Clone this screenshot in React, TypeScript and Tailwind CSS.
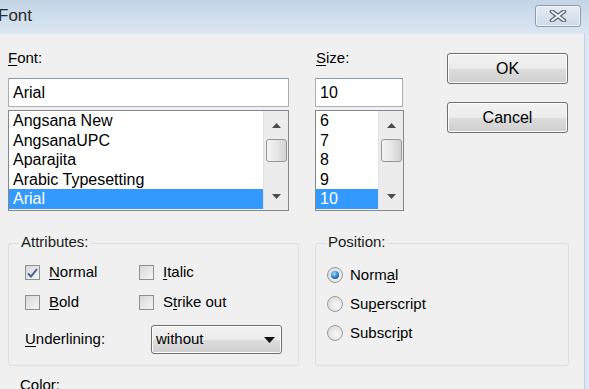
const FONTS = ["Angsana New", "AngsanaUPC", "Aparajita", "Arabic Typesetting", "Arial"];
const SIZES = ["6", "7", "8", "9", "10"];

function Key({ text, at }: { text: string; at: number }) {
  return (
    <>
      {text.slice(0, at)}
      <span className="underline underline-offset-2">{text[at]}</span>
      {text.slice(at + 1)}
    </>
  );
}

function Arrow({ down }: { down?: boolean }) {
  return (
    <svg width="9" height="5" viewBox="0 0 9 5" className="block">
      <path d={down ? "M0 0h9L4.5 5z" : "M0 5h9L4.5 0z"} fill="#4d4d4d" />
    </svg>
  );
}

function ScrollBar() {
  return (
    <div className="flex w-[25px] shrink-0 flex-col items-center bg-[#ececec] border-l border-[#e2e2e2]">
      <div className="mt-[12px]">
        <Arrow />
      </div>
      <div className="mt-[11px] h-[23px] w-[21px] rounded-[3px] border border-[#979797] bg-gradient-to-r from-[#f4f4f4] via-[#e6e6e6] to-[#d2d2d2]" />
      <div className="mt-auto mb-[11px]">
        <Arrow down />
      </div>
    </div>
  );
}

function ListBox({ items, width, selected }: { items: string[]; width: string; selected: number }) {
  return (
    <div className={`mt-[3px] flex h-[101px] ${width} border border-[#828790] bg-white`}>
      <div className="flex-1 overflow-hidden">
        {items.map((item, i) => (
          <div
            key={item}
            className={`h-[19.6px] pl-[4px] text-[16px] leading-[19.6px] ${
              i === selected ? "bg-[#3399ff] text-white" : "text-black"
            }`}
          >
            {item}
          </div>
        ))}
      </div>
      <ScrollBar />
    </div>
  );
}

function TextBox({ value, width }: { value: string; width: string }) {
  return (
    <div
      className={`mt-[11px] h-[29px] ${width} border border-[#abadb3] border-t-[#8b99ad] bg-white pl-[4px] text-[16px] leading-[27px] text-black`}
    >
      {value}
    </div>
  );
}

function Button({ label, className }: { label: string; className?: string }) {
  return (
    <div
      className={`flex h-[31px] w-[121px] items-center justify-center rounded-[3px] border border-[#707070] bg-[linear-gradient(#f2f2f2,#ebebeb_50%,#dddddd_50%,#cfcfcf)] text-[16px] text-black shadow-[inset_0_0_0_1px_#fcfcfc] ${className ?? ""}`}
    >
      {label}
    </div>
  );
}

function CheckBox({ checked }: { checked?: boolean }) {
  return (
    <div className="flex h-[15px] w-[15px] shrink-0 items-center justify-center border border-[#8e8f8f] bg-[linear-gradient(135deg,#d8d8d8,#f6f6f6)]">
      {checked && (
        <svg width="11" height="10" viewBox="0 0 11 10">
          <path d="M1 5.5 L4 8.5 L10 1" fill="none" stroke="#4a5f97" strokeWidth="2" />
        </svg>
      )}
    </div>
  );
}

function Radio({ checked }: { checked?: boolean }) {
  return (
    <div className="flex h-[16px] w-[16px] shrink-0 items-center justify-center rounded-full border border-[#9a9a9a] bg-[radial-gradient(circle_at_60%_60%,#f8f8f8,#d4d4d4)]">
      {checked && (
        <div className="h-[8px] w-[8px] rounded-full bg-[radial-gradient(circle_at_40%_35%,#a8dcff,#1d73bd_60%,#0c3f78)]" />
      )}
    </div>
  );
}

function Group({ title, className, children }: { title: string; className: string; children: React.ReactNode }) {
  return (
    <div className={`relative h-[123px] rounded-[3px] border border-[#d5dfe5] ${className}`}>
      <span className="absolute top-[-11px] left-[10px] bg-[#f0f0f0] px-[2px] text-[15px] leading-[18px] text-[#1a1a1a]">
        {title}
      </span>
      {children}
    </div>
  );
}

export default function App() {
  return (
    <div className="h-[389px] w-[589px] overflow-hidden bg-[#f0f0f0] font-['Liberation_Sans',Arial,sans-serif] text-[15px] text-black">
      {/* title bar */}
      <div className="flex h-[33px] items-start bg-gradient-to-b from-[#c4d4e6] to-[#dbe6f2]">
        <span className="ml-[-2px] mt-[6px] text-[17px] leading-[20px] text-[#2a2a2a]">Font</span>
        <div className="ml-auto mt-[5px] mr-[8px] flex h-[22px] w-[46px] items-center justify-center rounded-[3px] border border-[#8c9cb0] bg-gradient-to-b from-[#e4ecf5] to-[#cfdbe9] shadow-[inset_0_0_0_1px_#f0f5fa]">
          <svg width="18" height="12" viewBox="0 0 18 12">
            <path d="M3 1.5 L15 10.5 M15 1.5 L3 10.5" stroke="#5d6670" strokeWidth="4.5" strokeLinecap="round" />
            <path d="M3 1.5 L15 10.5 M15 1.5 L3 10.5" stroke="#eef1f5" strokeWidth="2" strokeLinecap="round" />
          </svg>
        </div>
      </div>

      <div className="flex h-[356px]">
        <div className="w-[584px] border-t border-[#dfe6ee] pl-[8px]">
          {/* top row */}
          <div className="flex">
            <div className="mt-[15px] flex w-[281px] flex-col">
              <span className="h-[18px] leading-[18px]">
                <Key text="Font:" at={0} />
              </span>
              <TextBox value="Arial" width="w-[281px]" />
              <ListBox items={FONTS} width="w-[281px]" selected={4} />
            </div>
            <div className="ml-[26px] mt-[15px] flex flex-col">
              <span className="ml-[1px] h-[18px] leading-[18px]">
                <Key text="Size:" at={0} />
              </span>
              <TextBox value="10" width="w-[88px]" />
              <ListBox items={SIZES} width="w-[89px]" selected={4} />
            </div>
            <div className="ml-[43px] mt-[19px] flex flex-col">
              <Button label="OK" />
              <Button label="Cancel" className="mt-[18px]" />
            </div>
          </div>

          {/* groups */}
          <div className="mt-[32px] flex">
            <Group title="Attributes:" className="w-[291px]">
              <div className="flex flex-col pl-[16px] pt-[21px]">
                <div className="flex h-[15px] items-center">
                  <div className="flex w-[114px] items-center gap-[9px]">
                    <CheckBox checked />
                    <span><Key text="Normal" at={0} /></span>
                  </div>
                  <div className="flex items-center gap-[9px]">
                    <CheckBox />
                    <span><Key text="Italic" at={0} /></span>
                  </div>
                </div>
                <div className="mt-[15px] flex h-[15px] items-center">
                  <div className="flex w-[114px] items-center gap-[9px]">
                    <CheckBox />
                    <span><Key text="Bold" at={0} /></span>
                  </div>
                  <div className="flex items-center gap-[9px]">
                    <CheckBox />
                    <span><Key text="Strike out" at={1} /></span>
                  </div>
                </div>
                <div className="mt-[15px] flex items-center">
                  <span className="w-[126px]">
                    <Key text="Underlining:" at={0} />
                  </span>
                  <div className="flex h-[29px] w-[131px] items-center rounded-[3px] border border-[#707070] bg-[linear-gradient(#f2f2f2,#ebebeb_50%,#dddddd_50%,#cfcfcf)] pl-[4px] pr-[6px] shadow-[inset_0_0_0_1px_#fcfcfc]">
                    <span className="flex-1">without</span>
                    <svg width="11" height="6" viewBox="0 0 11 6">
                      <path d="M0 0h11L5.5 6z" fill="#111" />
                    </svg>
                  </div>
                </div>
              </div>
            </Group>
            <Group title="Position:" className="ml-[16px] w-[254px]">
              <div className="flex flex-col gap-[13px] pl-[11px] pt-[23px]">
                {[
                  { t: "Normal", k: 4, c: true },
                  { t: "Superscript", k: 2 },
                  { t: "Subscript", k: 6 },
                ].map((r) => (
                  <div key={r.t} className="flex h-[16px] items-center gap-[7px]">
                    <Radio checked={r.c} />
                    <span><Key text={r.t} at={r.k} /></span>
                  </div>
                ))}
              </div>
            </Group>
          </div>

          <div className="ml-[12px] mt-[10px] leading-[18px]">Color:</div>
        </div>
        <div className="flex-1 border-l border-[#c3d2e2] bg-[#dce7f3]" />
      </div>
    </div>
  );
}
